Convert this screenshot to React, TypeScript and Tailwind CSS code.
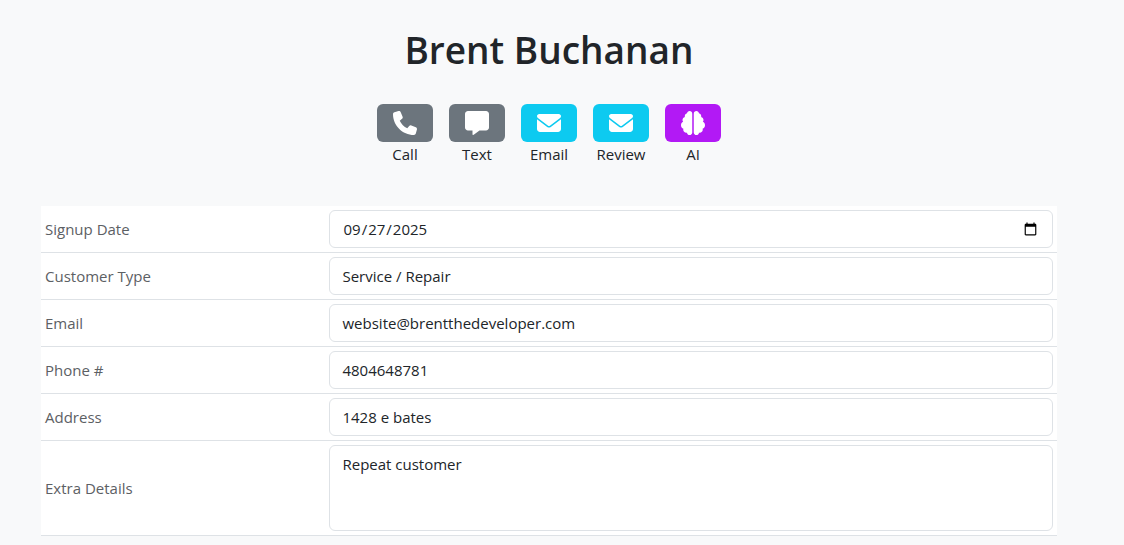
import { FaBrain, FaEnvelope, FaMessage, FaPhone } from "react-icons/fa6";
import type { IconType } from "react-icons";

type Action = { label: string; Icon: IconType; color: string };
type Field = { id: string; label: string; type: string; value: string };

const actions: Action[] = [
  { label: "Call", Icon: FaPhone, color: "bg-[#6c757d]" },
  { label: "Text", Icon: FaMessage, color: "bg-[#6c757d]" },
  { label: "Email", Icon: FaEnvelope, color: "bg-[#0dcaf0]" },
  { label: "Review", Icon: FaEnvelope, color: "bg-[#0dcaf0]" },
  { label: "AI", Icon: FaBrain, color: "bg-[#b219f5]" },
];

const fields: Field[] = [
  { id: "signup", label: "Signup Date", type: "date", value: "2025-09-27" },
  { id: "type", label: "Customer Type", type: "text", value: "Service / Repair" },
  { id: "email", label: "Email", type: "email", value: "website@brentthedeveloper.com" },
  { id: "phone", label: "Phone #", type: "tel", value: "4804648781" },
  { id: "address", label: "Address", type: "text", value: "1428 e bates" },
  { id: "details", label: "Extra Details", type: "textarea", value: "Repeat customer" },
];

const control =
  "block w-full rounded-md border border-[#dee2e6] bg-white px-3 py-1.5 text-[15px] leading-6 text-[#212529]";

function ActionButton({ label, Icon, color }: Action) {
  const id = `action-${label.toLowerCase()}`;
  return (
    <div className="flex w-14 flex-col items-center">
      <button
        type="button"
        aria-labelledby={id}
        className={`flex h-[38px] w-full items-center justify-center rounded-md text-white ${color}`}
      >
        <Icon size={24} />
      </button>
      <span id={id} className="leading-6">
        {label}
      </span>
    </div>
  );
}

function FieldRow({ id, label, type, value }: Field) {
  return (
    <tr className="border-b border-[#dee2e6]">
      <th scope="row" className="w-[28%] p-1 text-left align-middle font-normal text-[#5c6064]">
        <label htmlFor={id}>{label}</label>
      </th>
      <td className="p-1">
        {type === "textarea" ? (
          <textarea id={id} rows={3} defaultValue={value} className={`${control} resize-none`} />
        ) : (
          <input id={id} type={type} defaultValue={value} className={`${control} h-[38px]`} />
        )}
      </td>
    </tr>
  );
}

export default function App() {
  return (
    <main className="min-h-screen bg-[#f8f9fa] pt-6 pr-[67px] pb-2 pl-[41px] font-['Open_Sans','Noto_Sans',sans-serif] text-[15px] leading-6 text-[#212529]">
      <h1 className="pt-0.5 text-center text-[37px] leading-12 font-semibold">Brent Buchanan</h1>
      <div className="mt-[30px] flex justify-center gap-4">
        {actions.map((action) => (
          <ActionButton key={action.label} {...action} />
        ))}
      </div>
      <table className="mt-10 w-full table-fixed border-collapse bg-white">
        <tbody>
          {fields.map((field) => (
            <FieldRow key={field.id} {...field} />
          ))}
        </tbody>
      </table>
    </main>
  );
}
